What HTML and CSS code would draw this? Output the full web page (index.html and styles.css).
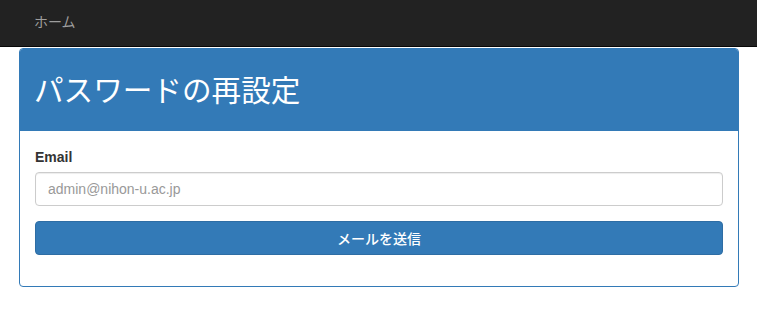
FILE: index.html
```html
<!DOCTYPE html>
<html lang="ja">
<head>
<meta charset="utf-8">
<title>パスワードの再設定</title>
<link rel="stylesheet" href="styles.css">
</head>
<body>
<nav class="navbar">
  <a class="nav-link" href="#">ホーム</a>
</nav>
<main class="container">
  <section class="panel">
    <header class="panel-heading">
      <h1 class="panel-title">パスワードの再設定</h1>
    </header>
    <div class="panel-body">
      <form class="form">
        <div class="form-group">
          <label class="label" for="email">Email</label>
          <input class="input" id="email" type="email" placeholder="admin@nihon-u.ac.jp">
        </div>
        <div class="form-group">
          <button class="btn" type="button">メールを送信</button>
        </div>
      </form>
    </div>
  </section>
</main>
</body>
</html>
```

FILE: styles.css
```css
* { box-sizing: border-box; }
html, body {
  margin: 0;
  padding: 0;
  background: #fff;
  font-family: "Liberation Sans", "Noto Sans CJK JP", sans-serif;
  font-size: 14px;
  line-height: 20px;
  color: #333;
}
.navbar {
  height: 47px;
  background: #222;
  border-bottom: 1px solid #080808;
  display: flex;
  align-items: center;
  padding: 0 34px 5px;
}
.nav-link {
  color: #9d9d9d;
  text-decoration: none;
  font-size: 14px;
  font-family: "Noto Sans CJK JP", sans-serif;
}
.container {
  padding: 1px 18px 0 19px;
}
.panel {
  border: 1px solid #337ab7;
  border-radius: 4px;
  background: #fff;
}
.panel-heading {
  background: #337ab7;
  color: #fff;
  padding: 0 15px;
  height: 82px;
  display: flex;
  align-items: center;
  border-top-left-radius: 3px;
  border-top-right-radius: 3px;
}
.panel-title {
  margin: 0 0 0 -1px;
  font-family: "Noto Sans CJK JP", sans-serif;
  font-weight: 400;
  font-size: 29.6px;
  line-height: 33px;
  padding-bottom: 3px;
}
.panel-body {
  padding: 16px 15px 16px;
}
.form-group {
  margin-bottom: 15px;
}
.label {
  display: block;
  font-weight: 700;
  margin-bottom: 5px;
}
.input {
  display: block;
  width: 100%;
  height: 34px;
  padding: 6px 12px;
  font-family: "Liberation Sans", sans-serif;
  font-size: 14px;
  color: #555;
  border: 1px solid #ccc;
  border-radius: 4px;
  box-shadow: inset 0 1px 1px rgba(0,0,0,.075);
}
.input::placeholder { color: #999; }
.btn {
  display: block;
  width: 100%;
  height: 34px;
  background: #337ab7;
  border: 1px solid #2e6da4;
  border-radius: 4px;
  color: #fff;
  font-family: "Liberation Sans", "Noto Sans CJK JP", sans-serif;
  font-size: 14px;
  font-weight: 500;
  padding: 0;
}
```
